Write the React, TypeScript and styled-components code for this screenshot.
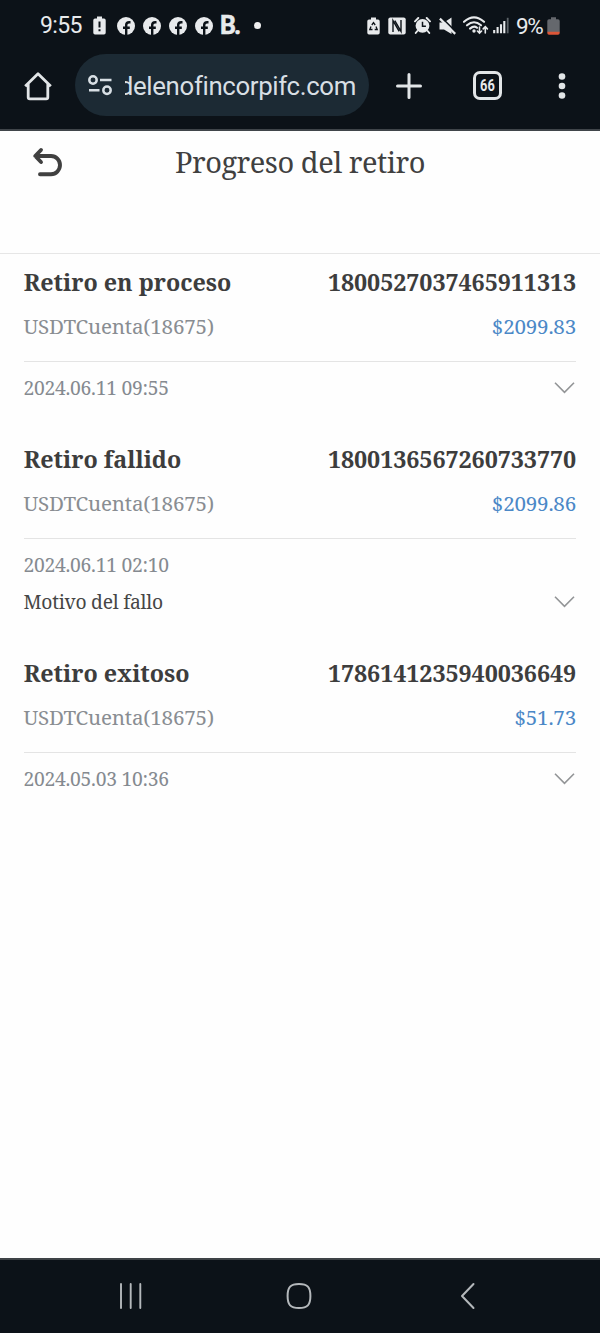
import React from 'react';
import styled, { createGlobalStyle } from 'styled-components';

const GlobalStyle = createGlobalStyle`
  * { box-sizing: border-box; }
  body { margin: 0; background: #fefefe; }
`;

const serif = `'Noto Serif', 'DejaVu Serif Condensed', 'DejaVu Serif', serif`;

const Screen = styled.div`
  width: 600px;
  height: 1333px;
  display: flex;
  flex-direction: column;
  background: #fefefe;
  overflow: hidden;
`;

const StatusBar = styled.div`
  height: 50px;
  flex: none;
  display: flex;
  align-items: center;
  justify-content: space-between;
  padding: 1px 40px 0 40px;
  background: #0c1218;
  color: #e8eaec;
  font-family: Roboto, sans-serif;
  svg { display: block; flex: none; }
`;

const StatusGroup = styled.div<{ $gap: number }>`
  display: flex;
  align-items: center;
  gap: ${(p) => p.$gap}px;
`;

const Clock = styled.span`
  width: 45px;
  font-size: 23px;
  line-height: 50px;
  letter-spacing: -0.6px;
  white-space: nowrap;
`;

const BrandB = styled.span`
  width: 21px;
  margin-left: -1px;
  font-size: 25px;
  font-weight: 700;
  line-height: 50px;
  letter-spacing: -2px;
  -webkit-text-stroke: 0.5px #e8eaec;
`;

const Dot = styled.span`
  width: 7px;
  height: 7px;
  border-radius: 50%;
  background: #f0f0f0;
  margin-left: 5px;
`;

const Percent = styled.span`
  width: 30px;
  font-size: 22.5px;
  line-height: 50px;
  letter-spacing: -1.4px;
  white-space: nowrap;
`;

const BrowserBar = styled.div`
  height: 81px;
  flex: none;
  display: flex;
  align-items: flex-start;
  padding: 4px 31px 0 23px;
  background: #0c1218;
  border-bottom: 2px solid #40454a;
`;

const BarButton = styled.button<{ $width: number; $before?: number }>`
  width: ${(p) => p.$width}px;
  height: 63px;
  margin: 0 0 0 ${(p) => p.$before ?? 0}px;
  padding: 0;
  display: flex;
  align-items: center;
  justify-content: center;
  flex: none;
  background: none;
  border: 0;
  svg { display: block; flex: none; }
`;

const AddressPill = styled.div`
  width: 294px;
  height: 62px;
  margin-left: 23px;
  padding: 0 13px 0 12px;
  display: flex;
  align-items: center;
  flex: none;
  border-radius: 31px;
  background: #1c2a34;
  svg { flex: none; }
`;

const Address = styled.div`
  width: 232px;
  margin-left: 12px;
  padding-top: 2px;
  display: flex;
  justify-content: flex-end;
  overflow: hidden;
  white-space: nowrap;
  font: 400 25.8px/60px Roboto, sans-serif;
  letter-spacing: -0.35px;
  color: #d8dfe4;
`;

const TabCount = styled.span`
  width: 29px;
  height: 29px;
  display: flex;
  align-items: center;
  justify-content: center;
  border: 3px solid #e2e5e7;
  border-radius: 7px;
  color: #e8eaec;
`;

const TabNumber = styled.span`
  font: 700 16px/1 Roboto, sans-serif;
  letter-spacing: 0.4px;
  transform: scaleX(0.8);
`;

const PageHeader = styled.header`
  height: 123px;
  flex: none;
  display: grid;
  grid-template-columns: 62px 1fr 62px;
  align-items: start;
  border-bottom: 1px solid #e6e6e6;
  font-family: ${serif};
`;

const BackButton = styled.button`
  height: 62px;
  padding: 0 0 0 32px;
  display: flex;
  align-items: center;
  background: none;
  border: 0;
  svg { display: block; flex: none; }
`;

const PageTitle = styled.h1`
  margin: 0;
  font-size: 29px;
  font-weight: 400;
  line-height: 61px;
  letter-spacing: -0.47px;
  text-align: center;
  white-space: nowrap;
  color: #404040;
`;

const List = styled.main`
  flex: 1;
  font-family: ${serif};
  white-space: nowrap;
`;

const Item = styled.article`
  padding: 8px 24px 25px;
`;

const Row = styled.div<{ $height: number }>`
  height: ${(p) => p.$height}px;
  display: flex;
  align-items: center;
  justify-content: space-between;
`;

const Status = styled.span`
  font-size: 23.3px;
  font-weight: 700;
  margin-left: -0.3px;
  color: #3d3d3d;
`;

const Reference = styled(Status)`
  letter-spacing: -0.1px;
  margin-right: -0.1px;
`;

const Account = styled.span`
  font-size: 20.6px;
  letter-spacing: -0.18px;
  margin-left: -0.5px;
  color: #898d92;
`;

const Amount = styled.span`
  font-size: 20.6px;
  letter-spacing: -0.2px;
  color: #4b88c7;
`;

const Details = styled.div`
  margin-top: 12px;
  padding-top: 7px;
  border-top: 1px solid #e4e4e4;
  svg { display: block; margin-right: 1px; }
`;

const DateText = styled.span`
  font-size: 19.3px;
  letter-spacing: -0.27px;
  margin-left: -0.5px;
  color: #858a90;
`;

const Reason = styled(DateText)`
  color: #464646;
`;

const NavBar = styled.nav`
  height: 75px;
  flex: none;
  display: grid;
  grid-template-columns: 168px 168px 168px;
  justify-content: center;
  justify-items: center;
  align-items: center;
  padding: 0 2px 1px 0;
  background: #0c1218;
  border-top: 2px solid #3e4347;
  svg { display: block; }
`;

const ink = '#e8eaec';

const BatteryAlert = () => (
  <svg width="13" height="19" viewBox="0 0 13 19">
    <path d="M4 0.5h5v2h2a1.7 1.7 0 0 1 1.7 1.7v12.6a1.7 1.7 0 0 1-1.7 1.7H2a1.7 1.7 0 0 1-1.7-1.7V4.2A1.7 1.7 0 0 1 2 2.5h2z" fill={ink} />
    <path d="M6.5 5.5v6M6.5 13.3v2" stroke="#0c1218" strokeWidth="2" />
  </svg>
);

const Facebook = () => (
  <svg width="18" height="18" viewBox="0 0 18 18">
    <circle cx="9" cy="9" r="9" fill={ink} />
    <path d="M9.2 18v-6.8M13.5 5.2h-1.4q-2.9 0-2.9 2.8v3.2M6 10.7h6.8" fill="none" stroke="#0c1218" strokeWidth="2.4" />
  </svg>
);

const BatteryRecycle = () => (
  <svg width="13" height="18" viewBox="0 0 13 18">
    <path d="M4 0.5h5v2h2a1.7 1.7 0 0 1 1.7 1.7v11.6a1.7 1.7 0 0 1-1.7 1.7H2a1.7 1.7 0 0 1-1.7-1.7V4.2A1.7 1.7 0 0 1 2 2.5h2z" fill={ink} />
    <path d="M4.8 8 6.5 5.6 8.2 8M9 9.6l1.2 2.9H7.7M5.5 12.5H2.8L4 9.6" fill="none" stroke="#0c1218" strokeWidth="1.3" />
  </svg>
);

const Nfc = () => (
  <svg width="18" height="18" viewBox="0 0 18 18">
    <rect x="0.3" y="0.5" width="17.4" height="17" rx="2" fill={ink} />
    <path d="M5 15V3.6L11.2 14.4M6.8 3.6 13 14.4V3" fill="none" stroke="#0c1218" strokeWidth="1.4" />
  </svg>
);

const Alarm = () => (
  <svg width="17" height="17" viewBox="0 0 17 17">
    <path d="M1 4.3 4.3 1M16 4.3 12.7 1M3.3 14l-1.6 2M13.7 14l1.6 2" stroke={ink} strokeWidth="1.9" strokeLinecap="round" />
    <circle cx="8.5" cy="8.8" r="6.9" fill={ink} />
    <path d="M8.5 4.8v4.4h3.4" fill="none" stroke="#0c1218" strokeWidth="1.5" />
  </svg>
);

const Muted = () => (
  <svg width="17" height="18" viewBox="0 0 17 18">
    <path d="M0.5 5.5h4.5l7.5-5v16.5L5 12.5h-4.5z" fill={ink} />
    <path d="M2.4 0.4 17.2 15.2" stroke="#0c1218" strokeWidth="1.6" />
    <path d="M0.9 1.6 16.2 16.9" stroke={ink} strokeWidth="2.2" />
  </svg>
);

const Wifi = () => (
  <svg width="26" height="19" viewBox="0 0 26 19">
    <g fill="none" stroke={ink} strokeWidth="2.1" strokeLinecap="round">
      <path d="M1 5.8Q11 -3 21 5.8M4 9.3Q11 3.2 18 9.3M7 12.6Q11 9.2 14 11.8" />
      <path d="M16.5 11v6M14.4 15l2.1 2.2 2.1-2.2M22.3 17v-6M20.2 12.9l2.1-2.2 2.1 2.2" strokeWidth="1.6" />
    </g>
    <circle cx="11" cy="15" r="1.7" fill={ink} />
  </svg>
);

const Signal = () => (
  <svg width="16" height="17" viewBox="0 0 16 17">
    <path d="M1.2 13v3.3M4.6 10v6.3M8 7.2v9.1M11.3 4v12.3" stroke={ink} strokeWidth="2.1" />
    <path d="M14.7 0.8v15.5" stroke="#5d6368" strokeWidth="1.8" />
  </svg>
);

const BatteryLow = () => (
  <svg width="13" height="18" viewBox="0 0 13 18">
    <path d="M4 0.3h5v2h2a1.7 1.7 0 0 1 1.7 1.7v11H0.3V4A1.7 1.7 0 0 1 2 2.3h2z" fill="#65686d" />
    <path d="M0.3 14.8h12.4v1.2a1.7 1.7 0 0 1-1.7 1.7H2A1.7 1.7 0 0 1 0.3 16z" fill="#dc5638" />
  </svg>
);

const HomeIcon = () => (
  <svg width="30" height="30" viewBox="0 0 30 30">
    <path d="M2.2 15.3 15 2.8l12.8 12.5M5.2 13v13.2q0 1.6 1.6 1.6h16.4q1.6 0 1.6-1.6V13" fill="none" stroke="#e2e5e7" strokeWidth="2.8" strokeLinejoin="round" />
  </svg>
);

const SiteSettings = () => (
  <svg width="26" height="22" viewBox="0 0 26 22">
    <g fill="none" stroke="#d8dfe4" strokeWidth="2.5">
      <circle cx="6" cy="6" r="3.7" />
      <circle cx="20" cy="16.3" r="3.7" />
      <path d="M13 6h11.5M2 16.3h10.5" />
    </g>
  </svg>
);

const Plus = () => (
  <svg width="26" height="26" viewBox="0 0 26 26">
    <path d="M13 1.5v23M1.5 13h23" stroke="#e2e5e7" strokeWidth="3" strokeLinecap="round" />
  </svg>
);

const Kebab = () => (
  <svg width="8" height="26" viewBox="0 0 8 26">
    <g fill="#e2e5e7">
      <circle cx="4" cy="3.5" r="3.3" />
      <circle cx="4" cy="13" r="3.3" />
      <circle cx="4" cy="22.5" r="3.3" />
    </g>
  </svg>
);

const BackArrow = () => (
  <svg width="30" height="30" viewBox="0 0 30 30">
    <path d="M9 3 3.2 9l5.8 6M3.5 9H19a9 9.1 0 0 1 0 18.2H8" fill="none" stroke="#404040" strokeWidth="3.9" strokeLinecap="round" strokeLinejoin="round" />
  </svg>
);

const Chevron = () => (
  <svg width="21" height="12" viewBox="0 0 21 12">
    <path d="M1 0.8l9.5 9.6L20 0.8" fill="none" stroke="#939597" strokeWidth="1.6" />
  </svg>
);

type Withdrawal = {
  status: string;
  id: string;
  amount: string;
  date: string;
  reason?: string;
};

const withdrawals: Withdrawal[] = [
  { status: 'Retiro en proceso', id: '1800527037465911313', amount: '$2099.83', date: '2024.06.11 09:55' },
  { status: 'Retiro fallido', id: '1800136567260733770', amount: '$2099.86', date: '2024.06.11 02:10', reason: 'Motivo del fallo' },
  { status: 'Retiro exitoso', id: '1786141235940036649', amount: '$51.73', date: '2024.05.03 10:36' },
];

export default function App() {
  return (
    <Screen>
      <GlobalStyle />
      <StatusBar>
        <StatusGroup $gap={11}>
          <StatusGroup $gap={8}>
            <Clock>9:55</Clock>
            <BatteryAlert />
          </StatusGroup>
          <StatusGroup $gap={8}>
            <Facebook />
            <Facebook />
            <Facebook />
            <Facebook />
            <BrandB>B.</BrandB>
            <Dot />
          </StatusGroup>
        </StatusGroup>
        <StatusGroup $gap={7}>
          <StatusGroup $gap={8}>
            <BatteryRecycle />
            <Nfc />
            <Alarm />
            <Muted />
          </StatusGroup>
          <StatusGroup $gap={4}>
            <Wifi />
            <Signal />
          </StatusGroup>
          <StatusGroup $gap={1}>
            <Percent>9%</Percent>
            <BatteryLow />
          </StatusGroup>
        </StatusGroup>
      </StatusBar>
      <BrowserBar>
        <BarButton $width={29} aria-label="Inicio"><HomeIcon /></BarButton>
        <AddressPill>
          <SiteSettings />
          <Address>delenofincorpifc.com</Address>
        </AddressPill>
        <BarButton $width={26} $before={27} aria-label="Nueva pestaña"><Plus /></BarButton>
        <BarButton $width={29} $before={51} aria-label="Pestañas">
          <TabCount><TabNumber>66</TabNumber></TabCount>
        </BarButton>
        <BarButton $width={8} $before={56} aria-label="Menú"><Kebab /></BarButton>
      </BrowserBar>
      <PageHeader>
        <BackButton aria-label="Volver"><BackArrow /></BackButton>
        <PageTitle>Progreso del retiro</PageTitle>
      </PageHeader>
      <List>
        {withdrawals.map((w) => (
          <Item key={w.id}>
            <Row $height={40}>
              <Status>{w.status}</Status>
              <Reference>{w.id}</Reference>
            </Row>
            <Row $height={47}>
              <Account>USDTCuenta(18675)</Account>
              <Amount>{w.amount}</Amount>
            </Row>
            <Details>
              <Row $height={37}>
                <DateText>{w.date}</DateText>
                {!w.reason && <Chevron />}
              </Row>
              {w.reason && (
                <Row $height={37}>
                  <Reason>{w.reason}</Reason>
                  <Chevron />
                </Row>
              )}
            </Details>
          </Item>
        ))}
      </List>
      <NavBar>
        <svg width="26" height="26" viewBox="0 0 26 26">
          <path d="M3 1v24M12.700 1v24M22.300 1v24" stroke="#b4b8bb" strokeWidth="1.9" strokeLinecap="round" />
        </svg>
        <svg width="26" height="28" viewBox="0 0 26 28">
          <path d="M13 2c8.5 0 11.4 3 11.4 12S21.500 26 13 26 1.600 23 1.600 14 4.500 2 13 2z" fill="none" stroke="#b4b8bb" strokeWidth="2" />
        </svg>
        <svg width="16" height="28" viewBox="0 0 16 28">
          <path d="M14.500 2 3 14l11.500 12" fill="none" stroke="#b4b8bb" strokeWidth="2" strokeLinecap="round" strokeLinejoin="round" />
        </svg>
      </NavBar>
    </Screen>
  );
}
